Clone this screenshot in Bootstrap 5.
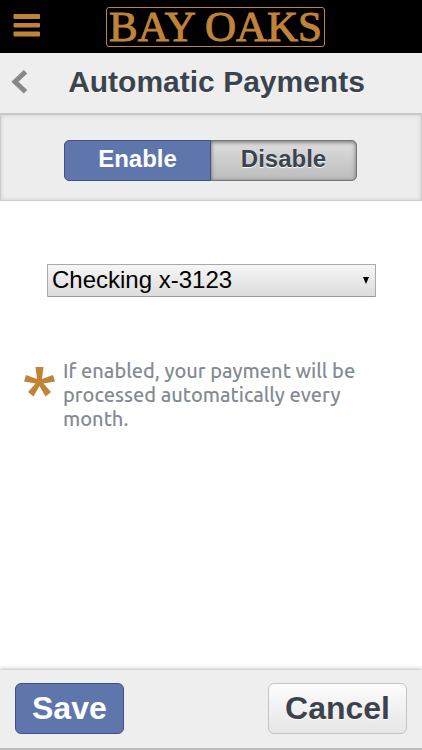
<!DOCTYPE html>
<html lang="en">
<head>
<meta charset="utf-8">
<meta name="viewport" content="width=device-width, initial-scale=1">
<title>Automatic Payments</title>
<link rel="stylesheet" href="https://cdn.jsdelivr.net/npm/bootstrap@5.3.0/dist/css/bootstrap.min.css">
<style>
  :root { --gold: #c08438; --ink: #3b444d; --blue: #5e76ab; --panel: #eee; }
  body { font-family: "Liberation Sans", Arial, sans-serif; color: var(--ink); }
  .topbar { background: #000; height: 53px; padding-left: 9px; }
  .menu-btn { left: 13px; top: 12px; }
  .logo { font: 43px/38px "Liberation Serif", "Times New Roman", serif; color: var(--gold); border: 1px solid var(--gold); border-radius: 3px; padding: 0 2px; margin-top: 1px; -webkit-text-stroke: 1px var(--gold); white-space: nowrap; }
  .logo:hover { color: var(--gold); }
  .titlebar { background: var(--panel); height: 60px; }
  .titlebar h1 { font-size: 30px; line-height: 36px; font-weight: 700; text-shadow: 0 1px 1px #fff; padding-left: 11px; margin-bottom: 2px; }
  .back-btn { left: 10px; top: 16px; }
  .toggle-panel { background: #ededed; border: 1px solid #ccc; border-top: 2px solid #c8c8c8; box-shadow: inset 0 0 4px #ccc; padding: 25px 64px 19px 63px; }
  .toggle-panel .btn { font-size: 24px; line-height: 29px; font-weight: 700; padding: 3px 0 7px; border-radius: 5px; flex: 1 1 0; }
  .btn-blue, .btn-blue:hover, .btn-check:checked + .btn-blue { background: var(--blue); color: #fff; border-color: #474d8c; }
  .btn-off, .btn-off:hover { background: linear-gradient(#dedede, #bcbcbc); color: var(--ink); border-color: #777; box-shadow: inset 0 1px 4px #666; text-shadow: 0 1px 1px #fff; }
  .account { margin: 63px 46px 0 47px; }
  .account select { appearance: none; width: 100%; height: 33px; padding: 0 28px 1px 4px; font-size: 24px; line-height: 30px; color: #000; border: 1px solid #aaa; border-bottom-color: #999; border-radius: 1px; background: linear-gradient(#f6f6f6, #dcdcdc); }
  .account svg { right: 7px; top: 13px; pointer-events: none; }
  .note { margin: 62px 60px 0 24px; gap: 8px; }
  .note svg { margin-top: 8px; }
  .note p { font: 500 20px/24px Ubuntu, "Noto Sans", sans-serif; color: #848b94; }
  .actions { background: var(--panel); border-bottom: 2px solid #bbb; box-shadow: 0 -1px 4px #bbb; padding: 13px 15px 14px; }
  .actions .btn { font-size: 32px; line-height: 37px; font-weight: 700; padding: 6px 16px; border-radius: 6px; }
  .btn-pale, .btn-pale:hover { background: linear-gradient(#fcfcfc, #e6e6e6); color: var(--ink); border-color: #c4c4c4; text-shadow: 0 1px 1px #fff; }
</style>
</head>
<body class="d-flex flex-column min-vh-100 bg-white">
<header>
  <nav class="topbar position-relative d-flex justify-content-center align-items-center" aria-label="Main">
    <button type="button" class="menu-btn btn p-0 border-0 position-absolute d-flex" aria-label="Menu">
      <svg width="28" height="25" viewBox="0 0 28 25" fill="#c08438"><rect x="0.500" y="2" width="26.500" height="5" rx="1"/><rect x="0.500" y="11" width="26.500" height="4.500" rx="1"/><rect x="0.500" y="19.500" width="26.500" height="5" rx="1"/></svg>
    </button>
    <a href="#" class="logo text-decoration-none">BAY OAKS</a>
  </nav>
  <div class="titlebar position-relative d-flex justify-content-center align-items-center">
    <button type="button" class="back-btn btn p-0 border-0 position-absolute d-flex" aria-label="Back">
      <svg width="18" height="26" viewBox="0 0 18 26" fill="none" stroke="#888" stroke-width="5"><path d="M15.500 2.800 5 12.800 15.500 22.800"/></svg>
    </button>
    <h1>Automatic Payments</h1>
  </div>
</header>
<main class="flex-grow-1">
  <div class="toggle-panel">
    <div class="btn-group d-flex" role="group" aria-label="Automatic payments">
      <input type="radio" class="btn-check" name="auto" id="enable" checked>
      <label class="btn btn-blue" for="enable">Enable</label>
      <input type="radio" class="btn-check" name="auto" id="disable">
      <label class="btn btn-off" for="disable">Disable</label>
    </div>
  </div>
  <div class="account position-relative">
    <select id="account" aria-label="Account"><option>Checking x-3123</option></select>
    <svg class="position-absolute" width="6" height="7" viewBox="0 0 6 7" aria-hidden="true"><path d="M0 0h6L3 7z"/></svg>
  </div>
  <div class="note d-flex align-items-start">
    <svg class="flex-shrink-0" width="31" height="30" viewBox="0 0 31 30" fill="#c08438" aria-hidden="true"><path d="M11.500 0h8l-1.500 12L29 8l2 6.500-11.500 2L27 25l-5.500 4.500-6-10.500-6 10.500L4 25l7.500-8.500L0 14.500 2 8l11 4z"/></svg>
    <p class="mb-0">If enabled, your payment will be processed automatically every month.</p>
  </div>
</main>
<footer class="actions d-flex justify-content-between">
  <button type="button" class="btn btn-blue">Save</button>
  <button type="button" class="btn btn-pale">Cancel</button>
</footer>
<script src="https://cdn.jsdelivr.net/npm/bootstrap@5.3.0/dist/js/bootstrap.bundle.min.js"></script>
</body>
</html>
